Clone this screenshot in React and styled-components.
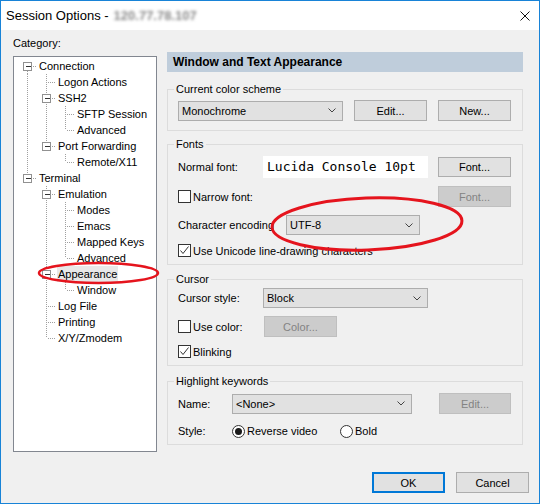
import React from 'react'
import styled, { createGlobalStyle } from 'styled-components'

const Global = createGlobalStyle`
  html, body { margin: 0; padding: 0; background: #fff; }
  body {
    font-family: "Liberation Sans", Arial, sans-serif;
    font-size: 11px;
    color: #000;
  }
  * { box-sizing: border-box; }
`

const Window = styled.div`
  position: relative;
  width: 540px;
  height: 504px;
  border: 1px solid #1883d7;
  background: #f0f0f0;
  display: flex;
  flex-direction: column;
  overflow: hidden;
`

const TitleBar = styled.div`
  height: 29px;
  flex-shrink: 0;
  background: #fff;
  display: flex;
  align-items: center;
  padding-left: 5px;
  font-size: 13px;
`

const HostName = styled.span`
  margin-left: 5px;
  color: #8a8a8a;
  font-weight: bold;
  filter: blur(1.4px);
`

const CloseBtn = styled.div`
  margin-left: auto;
  margin-right: 9px;
  display: flex;
  align-items: center;
`

const Body = styled.div`
  flex: 1;
  display: flex;
  flex-direction: column;
  padding: 6px 0 10px 12px;
`

const Main = styled.div`
  display: flex;
  gap: 10px;
`

const LeftCol = styled.div`
  width: 144px;
  display: flex;
  flex-direction: column;
`

const Caption = styled.div`
  height: 14px;
  line-height: 14px;
  margin-bottom: 6px;
`

const TreeBox = styled.div`
  height: 396px;
  background: #fff;
  border: 1px solid #828790;
  padding: 1px 0 0 4px;
`

const TreeRow = styled.div`
  display: flex;
  align-items: center;
  height: 16px;
  line-height: 16px;
`

const TreeLabel = styled.span`
  margin-left: 1px;
  padding: 0 1px;
  white-space: nowrap;
  background: ${(p) => (p.$selected ? '#e8e8e8' : 'transparent')};
`

const RightCol = styled.div`
  width: 356px;
  padding-top: 16px;
  display: flex;
  flex-direction: column;
`

const PanelHeader = styled.div`
  height: 20px;
  line-height: 20px;
  background: #bfcddb;
  padding-left: 6px;
  font-weight: bold;
  font-size: 12px;
`

const Group = styled.fieldset`
  margin: ${(p) => p.$mt || 7}px 0 0 0;
  padding: 0 11px ${(p) => p.$pb || 6}px 10px;
  border: 1px solid #dcdcdc;
  min-width: 0;
`

const Legend = styled.legend`
  margin-left: -4px;
  padding: 0 2px;
  line-height: 14px;
  font-size: 11px;
`

const Row = styled.div`
  display: flex;
  align-items: center;
  height: ${(p) => p.$h}px;
  margin-top: ${(p) => p.$mt || 0}px;
`

const Label = styled.span`
  width: ${(p) => (p.$w ? `${p.$w}px` : 'auto')};
  flex-shrink: 0;
  white-space: nowrap;
`

const Select = styled.div`
  width: ${(p) => p.$w}px;
  height: 20px;
  background: #e1e1e1;
  border: 1px solid #adadad;
  display: flex;
  align-items: center;
  justify-content: space-between;
  padding: 0 6px 0 3px;
  flex-shrink: 0;
`

const Button = styled.div`
  width: ${(p) => p.$w || 73}px;
  height: ${(p) => p.$h || 21}px;
  margin-left: ${(p) => (p.$auto ? 'auto' : `${p.$ml || 0}px`)};
  flex-shrink: 0;
  display: flex;
  align-items: center;
  justify-content: center;
  background: ${(p) => (p.$disabled ? '#cccccc' : '#e1e1e1')};
  border: 1px solid ${(p) => (p.$disabled ? '#bfbfbf' : p.$default ? '#0078d7' : '#adadad')};
  box-shadow: ${(p) => (p.$default ? 'inset 0 0 0 1px #0078d7' : 'none')};
  color: ${(p) => (p.$disabled ? '#838383' : '#000')};
`

const FontPreview = styled.div`
  width: 165px;
  height: 22px;
  background: #fff;
  padding-left: 4px;
  font-family: "DejaVu Sans Mono", "Liberation Mono", monospace;
  font-size: 13px;
  line-height: 22px;
  flex-shrink: 0;
`

const Check = styled.span`
  display: inline-flex;
  align-items: center;
  justify-content: center;
  width: 13px;
  height: 13px;
  border: 1px solid #333;
  background: #fff;
  margin-right: 2px;
  flex-shrink: 0;
`

const CheckLabel = styled.label`
  display: inline-flex;
  align-items: center;
  width: ${(p) => (p.$w ? `${p.$w}px` : 'auto')};
  flex-shrink: 0;
  white-space: nowrap;
`

const Radio = styled.span`
  display: inline-flex;
  align-items: center;
  justify-content: center;
  width: 13px;
  height: 13px;
  border: 1px solid #333;
  border-radius: 50%;
  background: #fff;
  margin-right: 2px;
  flex-shrink: 0;

  &::after {
    content: '';
    display: ${(p) => (p.$on ? 'block' : 'none')};
    width: 7px;
    height: 7px;
    border-radius: 50%;
    background: #1a1a1a;
  }
`

const Footer = styled.div`
  display: flex;
  justify-content: flex-end;
  gap: 11px;
  margin-top: 20px;
  padding-right: 10px;
`

const Marks = styled.svg`
  position: absolute;
  left: -1px;
  top: -1px;
  pointer-events: none;
`

const Chevron = () => (
  <svg width="8" height="5" viewBox="0 0 8 5">
    <polyline points="0.5,0.5 4,4 7.5,0.5" fill="none" stroke="#444" strokeWidth="1" />
  </svg>
)

const Tick = () => (
  <svg width="11" height="11" viewBox="0 0 11 11">
    <polyline points="1.5,5.5 4,8.5 9.5,1.5" fill="none" stroke="#333" strokeWidth="1" />
  </svg>
)

const CheckBox = ({ checked, children, w }) => (
  <CheckLabel $w={w}>
    <Check>{checked && <Tick />}</Check>
    {children}
  </CheckLabel>
)

const RadioBtn = ({ on, children, w }) => (
  <CheckLabel $w={w}>
    <Radio $on={on} />
    {children}
  </CheckLabel>
)

const tree = [
  { label: 'Connection', level: 0, kids: true, first: true, guides: [] },
  { label: 'Logon Actions', level: 1, guides: [true] },
  { label: 'SSH2', level: 1, kids: true, guides: [true] },
  { label: 'SFTP Session', level: 2, guides: [true, true] },
  { label: 'Advanced', level: 2, last: true, guides: [true, true] },
  { label: 'Port Forwarding', level: 1, kids: true, last: true, guides: [true] },
  { label: 'Remote/X11', level: 2, last: true, guides: [true, false] },
  { label: 'Terminal', level: 0, kids: true, last: true, guides: [] },
  { label: 'Emulation', level: 1, kids: true, guides: [false] },
  { label: 'Modes', level: 2, guides: [false, true] },
  { label: 'Emacs', level: 2, guides: [false, true] },
  { label: 'Mapped Keys', level: 2, guides: [false, true] },
  { label: 'Advanced', level: 2, last: true, guides: [false, true] },
  { label: 'Appearance', level: 1, kids: true, selected: true, guides: [false] },
  { label: 'Window', level: 2, last: true, guides: [false, true] },
  { label: 'Log File', level: 1, guides: [false] },
  { label: 'Printing', level: 1, guides: [false] },
  { label: 'X/Y/Zmodem', level: 1, last: true, guides: [false] },
]

const dots = { stroke: '#a0a0a0', strokeWidth: 1, strokeDasharray: '1 1', shapeRendering: 'crispEdges' }

const Connector = ({ node }) => {
  const w = 19 * (node.level + 1)
  const cx = 19 * node.level + 9.5
  return (
    <svg width={w} height="16" style={{ flexShrink: 0 }}>
      {node.guides.map((g, i) =>
        g ? <line key={i} x1={19 * i + 9.5} y1="0" x2={19 * i + 9.5} y2="16" {...dots} /> : null
      )}
      <line x1={cx} y1={node.first ? 9 : 0} x2={cx} y2={node.last ? 8 : 16} {...dots} />
      <line x1={cx + 1} y1="8.5" x2={w} y2="8.5" {...dots} />
      {node.kids && (
        <g shapeRendering="crispEdges">
          <rect x={cx - 4} y="4.5" width="8" height="8" fill="#fff" stroke="#919191" />
          <line x1={cx - 2} y1="8.5" x2={cx + 3} y2="8.5" stroke="#333" />
        </g>
      )}
    </svg>
  )
}

const App = () => {
  return (
    <Window>
      <Global />
      <TitleBar>
        Session Options -<HostName>120.77.78.107</HostName>
        <CloseBtn>
          <svg width="10" height="10" viewBox="0 0 10 10">
            <path d="M0.5 0.5 L9.5 9.5 M9.5 0.5 L0.5 9.5" stroke="#111" strokeWidth="1" />
          </svg>
        </CloseBtn>
      </TitleBar>
      <Body>
        <Main>
          <LeftCol>
            <Caption>Category:</Caption>
            <TreeBox>
              {tree.map((node, i) => (
                <TreeRow key={i}>
                  <Connector node={node} />
                  <TreeLabel $selected={node.selected}>{node.label}</TreeLabel>
                </TreeRow>
              ))}
            </TreeBox>
          </LeftCol>
          <RightCol>
            <PanelHeader>Window and Text Appearance</PanelHeader>

            <Group $mt={10} $pb={9}>
              <Legend>Current color scheme</Legend>
              <Row $h={21} $mt={4}>
                <Select $w={165}>
                  Monochrome
                  <Chevron />
                </Select>
                <Button $ml={11}>Edit...</Button>
                <Button $ml={11}>New...</Button>
              </Row>
            </Group>

            <Group $mt={6} $pb={5}>
              <Legend>Fonts</Legend>
              <Row $h={22} $mt={5}>
                <Label $w={85}>Normal font:</Label>
                <FontPreview>Lucida Console 10pt</FontPreview>
                <Button $ml={10} $h={20}>Font...</Button>
              </Row>
              <Row $h={21} $mt={8}>
                <CheckBox>Narrow font:</CheckBox>
                <Button $auto $disabled>Font...</Button>
              </Row>
              <Row $h={20} $mt={8}>
                <Label $w={108}>Character encoding</Label>
                <Select $w={134}>
                  UTF-8
                  <Chevron />
                </Select>
              </Row>
              <Row $h={17} $mt={7}>
                <CheckBox checked>Use Unicode line-drawing characters</CheckBox>
              </Row>
            </Group>

            <Group $mt={7} $pb={6}>
              <Legend>Cursor</Legend>
              <Row $h={20} $mt={2}>
                <Label $w={85}>Cursor style:</Label>
                <Select $w={165}>
                  Block
                  <Chevron />
                </Select>
              </Row>
              <Row $h={21} $mt={8}>
                <CheckBox w={86}>Use color:</CheckBox>
                <Button $disabled>Color...</Button>
              </Row>
              <Row $h={15} $mt={7}>
                <CheckBox checked>Blinking</CheckBox>
              </Row>
            </Group>

            <Group $mt={8} $pb={6}>
              <Legend>Highlight keywords</Legend>
              <Row $h={21} $mt={5}>
                <Label $w={54}>Name:</Label>
                <Select $w={180}>
                  &lt;None&gt;
                  <Chevron />
                </Select>
                <Button $auto $w={72} $disabled>Edit...</Button>
              </Row>
              <Row $h={14} $mt={10}>
                <Label $w={54}>Style:</Label>
                <RadioBtn on w={108}>Reverse video</RadioBtn>
                <RadioBtn>Bold</RadioBtn>
              </Row>
            </Group>
          </RightCol>
        </Main>
        <Footer>
          <Button $default>OK</Button>
          <Button>Cancel</Button>
        </Footer>
      </Body>
      <Marks width="540" height="504">
        <ellipse cx="98.5" cy="273" rx="59.5" ry="10" fill="none" stroke="#e5141d" strokeWidth="2.5" />
        <ellipse
          cx="367"
          cy="224"
          rx="95"
          ry="26"
          fill="none"
          stroke="#e5141d"
          strokeWidth="3"
          transform="rotate(-2 367 224)"
        />
      </Marks>
    </Window>
  )
}

export default App
